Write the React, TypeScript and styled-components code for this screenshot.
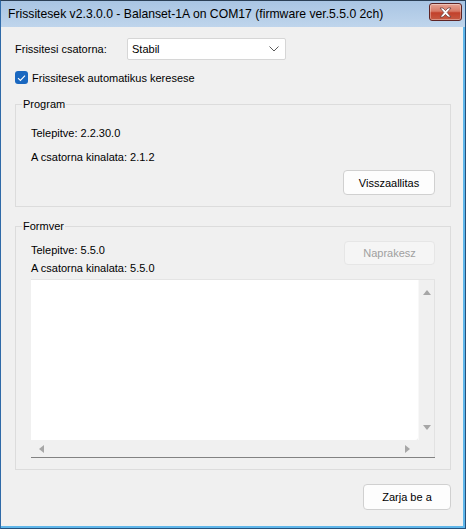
import React from 'react'
import styled, { createGlobalStyle } from 'styled-components'

const GlobalStyle = createGlobalStyle`
    html, body {
        margin: 0;
        padding: 0;
        background: #ffffff;
    }
    * {
        box-sizing: border-box;
    }
`

const SWindow = styled.div`
    width: 466px;
    height: 529px;
    display: flex;
    flex-direction: column;
    border-top: 1px solid #2b3f55;
    border-left: 1px solid #2f6aa8;
    border-right: 1px solid #24507c;
    border-bottom: 1px solid #24507c;
    background: #f0f0f0;
    font-family: 'Liberation Sans', Arial, sans-serif;
    font-size: 11px;
    color: #000;
`

const STitleBar = styled.div`
    height: 26px;
    flex-shrink: 0;
    display: flex;
    align-items: center;
    justify-content: space-between;
    padding: 0 3px 0 7px;
    background: linear-gradient(#a9c5e3, #bfd5ec);
    font-family: 'Liberation Sans', Arial, sans-serif;
    font-size: 12.2px;
    white-space: nowrap;
    color: #000;
`

const SCloseButton = styled.div`
    width: 33px;
    height: 18px;
    margin-top: -4px;
    display: flex;
    align-items: center;
    justify-content: center;
    border: 1px solid #5e2424;
    border-radius: 3px;
    background: linear-gradient(#e5a393 0%, #d77a66 45%, #c2412b 55%, #c65a42 100%);
    box-shadow: inset 0 0 0 1px rgba(255, 255, 255, 0.35);
`

const SFrame = styled.div`
    flex: 1;
    display: flex;
    flex-direction: column;
    border-right: 2px solid #5fb6ea;
    border-bottom: 2px solid #5fb6ea;
`

const SBody = styled.div`
    flex: 1;
    display: flex;
    flex-direction: column;
    padding: 11px 12px 14px 14px;
`

const SChannelRow = styled.div`
    display: flex;
    align-items: center;
    height: 22px;
`

const SLabel = styled.span`
    width: 112px;
`

const SSelect = styled.div`
    width: 159px;
    height: 22px;
    display: flex;
    align-items: center;
    justify-content: space-between;
    padding: 0 6px 0 4px;
    background: #ffffff;
    border: 1px solid #d6d6d6;
    border-radius: 2px;
`

const SCheckRow = styled.div`
    display: flex;
    align-items: center;
    gap: 4px;
    margin-top: 11px;
    height: 13px;
`

const SCheckbox = styled.div`
    width: 13px;
    height: 13px;
    border-radius: 3px;
    background: #1a68c0;
    display: flex;
    align-items: center;
    justify-content: center;
`

const SGroup = styled.fieldset<{ $top: number }>`
    margin: ${(p) => p.$top}px 0 0 0;
    padding: 0 15px 11px 15px;
    border: 1px solid #dcdcdc;
    min-width: 0;
    display: flex;
    flex-direction: column;
`

const SLegend = styled.legend`
    margin-left: -9px;
    padding: 0 1px;
    line-height: 12px;
    font-size: 11px;
`

const SInfoText = styled.div<{ $gap?: number }>`
    line-height: 14px;
    margin-top: ${(p) => p.$gap ?? 0}px;
`

const SButtonRow = styled.div`
    display: flex;
    justify-content: flex-end;
    margin-top: 6px;
`

const SButton = styled.div<{ $w: number; $h: number; $disabled?: boolean }>`
    width: ${(p) => p.$w}px;
    height: ${(p) => p.$h}px;
    display: flex;
    align-items: center;
    justify-content: center;
    background: ${(p) => (p.$disabled ? '#f5f5f5' : '#fdfdfd')};
    border: 1px solid ${(p) => (p.$disabled ? '#e6e6e6' : '#d0d0d0')};
    border-radius: 4px;
    color: ${(p) => (p.$disabled ? '#a0a0a0' : '#000')};
`

const SFirmwareHead = styled.div`
    display: grid;
    grid-template-columns: 1fr auto;
    margin-top: 9px;
`

const SFirmwareInfo = styled.div`
    padding-top: 2px;
    display: flex;
    flex-direction: column;
    gap: 4px;
`

const SLogBox = styled.div`
    margin-top: 4px;
    height: 179px;
    display: grid;
    grid-template-columns: 1fr 17px;
    grid-template-rows: 1fr 17px;
    border-top: 1px solid #e4e4e4;
    border-bottom: 1px solid #828282;
    background: #f0f0f0;
`

const SLogArea = styled.div`
    background: #ffffff;
    border-bottom-right-radius: 3px;
`

const SScrollV = styled.div`
    display: flex;
    flex-direction: column;
    justify-content: space-between;
    align-items: center;
    padding: 8px 0 8px;
    border-left: 1px solid #f8f8f8;
    border-right: 1px solid #e2e2e2;
`

const SScrollH = styled.div`
    display: flex;
    justify-content: space-between;
    align-items: center;
    padding: 0 7px 0 7px;
`

const SCorner = styled.div`
    border-right: 1px solid #e2e2e2;
`

const SFooter = styled.div`
    display: flex;
    justify-content: flex-end;
    margin-top: 14px;
`

const Arrow = ({ dir }: { dir: 'up' | 'down' | 'left' | 'right' }) => {
    const pts = {
        up: '0,7 4,2 8,7',
        down: '0,1 4,6 8,1',
        left: '6,0 1,4 6,8',
        right: '2,0 7,4 2,8',
    }[dir]
    return (
        <svg width="8" height="8" viewBox="0 0 8 8">
            <polygon points={pts} fill="#a6a6a6" />
        </svg>
    )
}

export default function App() {
    return (
        <>
            <GlobalStyle />
            <SWindow>
                <STitleBar>
                    <span>Frissitesek v2.3.0.0 - Balanset-1A on COM17 (firmware ver.5.5.0 2ch)</span>
                    <SCloseButton>
                        <svg width="15" height="11" viewBox="0 0 15 11">
                            <path
                                d="M2 1 L5 1 L7.5 3.6 L10 1 L13 1 L9.2 5.5 L13 10 L10 10 L7.5 7.4 L5 10 L2 10 L5.8 5.5 Z"
                                fill="#ffffff"
                                stroke="#6b4040"
                                strokeWidth="0.8"
                                strokeLinejoin="round"
                            />
                        </svg>
                    </SCloseButton>
                </STitleBar>
                <SFrame>
                    <SBody>
                        <SChannelRow>
                            <SLabel>Frissitesi csatorna:</SLabel>
                            <SSelect>
                                <span>Stabil</span>
                                <svg width="10" height="6" viewBox="0 0 10 6">
                                    <polyline
                                        points="0.5,0.5 5,5 9.5,0.5"
                                        fill="none"
                                        stroke="#5a5a5a"
                                        strokeWidth="1"
                                    />
                                </svg>
                            </SSelect>
                        </SChannelRow>
                        <SCheckRow>
                            <SCheckbox>
                                <svg width="9" height="8" viewBox="0 0 9 8">
                                    <polyline
                                        points="1,4.2 3.4,6.4 8,1.6"
                                        fill="none"
                                        stroke="#ffffff"
                                        strokeWidth="1.1"
                                    />
                                </svg>
                            </SCheckbox>
                            <span>Frissitesek automatikus keresese</span>
                        </SCheckRow>

                        <SGroup $top={14}>
                            <SLegend>Program</SLegend>
                            <SInfoText $gap={16}>Telepitve: 2.2.30.0</SInfoText>
                            <SInfoText $gap={10}>A csatorna kinalata: 2.1.2</SInfoText>
                            <SButtonRow>
                                <SButton $w={92} $h={25}>Visszaallitas</SButton>
                            </SButtonRow>
                        </SGroup>

                        <SGroup $top={13}>
                            <SLegend>Formver</SLegend>
                            <SFirmwareHead>
                                <SFirmwareInfo>
                                    <SInfoText>Telepitve: 5.5.0</SInfoText>
                                    <SInfoText>A csatorna kinalata: 5.5.0</SInfoText>
                                </SFirmwareInfo>
                                <SButton $w={91} $h={24} $disabled>
                                    Naprakesz
                                </SButton>
                            </SFirmwareHead>
                            <SLogBox>
                                <SLogArea />
                                <SScrollV>
                                    <Arrow dir="up" />
                                    <Arrow dir="down" />
                                </SScrollV>
                                <SScrollH>
                                    <Arrow dir="left" />
                                    <Arrow dir="right" />
                                </SScrollH>
                                <SCorner />
                            </SLogBox>
                        </SGroup>

                        <SFooter>
                            <SButton $w={88} $h={26}>Zarja be a</SButton>
                        </SFooter>
                    </SBody>
                </SFrame>
            </SWindow>
        </>
    )
}
